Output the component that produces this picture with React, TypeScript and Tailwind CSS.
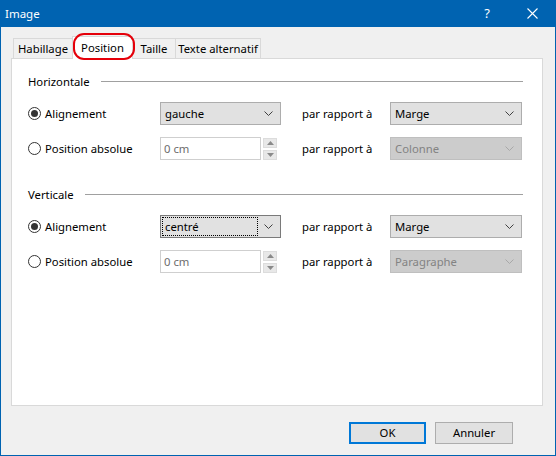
import React from "react";

const font = { fontFamily: '"Noto Sans", "Segoe UI", sans-serif' };

function Chevron({ color = "#606060" }: { color?: string }) {
  return (
    <svg width="9" height="5" viewBox="0 0 9 5" className="shrink-0">
      <path d="M0.5 0.5 L4.5 4.5 L8.5 0.5" fill="none" stroke={color} strokeWidth="1" />
    </svg>
  );
}

function Select({
  value,
  width,
  disabled,
  focused,
}: {
  value: string;
  width: string;
  disabled?: boolean;
  focused?: boolean;
}) {
  return (
    <div
      className={
        "h-[23px] border flex items-center pr-[7px] " +
        width +
        (disabled
          ? " bg-[#cccccc] border-[#bfbfbf] text-[#838383]"
          : focused
          ? " bg-[#e1e1e1] border-[#7a7a7a] text-black"
          : " bg-[#e1e1e1] border-[#adadad] text-black")
      }
    >
      <div className="flex-1 h-full p-[1px]">
        <div
          className={
            "h-full flex items-center pl-[2px] leading-none whitespace-nowrap " +
            (focused ? "border border-dotted border-black" : "border border-transparent")
          }
        >
          {value}
        </div>
      </div>
      <div className="w-[14px] flex justify-end">
        <Chevron color={disabled ? "#a8a8a8" : "#404040"} />
      </div>
    </div>
  );
}

function Radio({ checked, label }: { checked?: boolean; label: string }) {
  return (
    <div className="w-[132px] flex items-center gap-[4px]">
      <div className="w-[13px] h-[13px] rounded-full border border-[#333333] bg-white flex items-center justify-center shrink-0">
        {checked && <div className="w-[7px] h-[7px] rounded-full bg-[#333333]" />}
      </div>
      <span className="leading-none whitespace-nowrap">{label}</span>
    </div>
  );
}

function Spin() {
  return (
    <div className="flex items-center gap-[2px]">
      <div className="w-[101px] h-[23px] border border-[#cfcfcf] bg-white text-[#6d6d6d] flex items-center pl-[3px] leading-none">
        0 cm
      </div>
      <div className="flex flex-col gap-[2px]">
        <div className="w-[14px] h-[10px] bg-[#e8e8e8] border border-[#dcdcdc] flex items-center justify-center">
          <svg width="7" height="4" viewBox="0 0 7 4">
            <path d="M0 4 L3.5 0 L7 4 Z" fill="#8a8a8a" />
          </svg>
        </div>
        <div className="w-[14px] h-[10px] bg-[#e8e8e8] border border-[#dcdcdc] flex items-center justify-center">
          <svg width="7" height="4" viewBox="0 0 7 4">
            <path d="M0 0 L7 0 L3.5 4 Z" fill="#8a8a8a" />
          </svg>
        </div>
      </div>
    </div>
  );
}

function Header({ label }: { label: string }) {
  return (
    <div className="h-[16px] flex items-center gap-[11px] pr-[19px]">
      <span className="leading-none">{label}</span>
      <div className="flex-1 h-px bg-[#a0a0a0] mt-[-2px]" />
    </div>
  );
}

function AlignRow({ value, focused }: { value: string; focused?: boolean }) {
  return (
    <div className="flex items-center">
      <Radio checked label="Alignement" />
      <Select value={value} width="w-[121px]" focused={focused} />
      <span className="ml-[21px] w-[88px] leading-none whitespace-nowrap">par rapport à</span>
      <Select value="Marge" width="w-[132px]" />
    </div>
  );
}

function AbsRow({ rel }: { rel: string }) {
  return (
    <div className="flex items-center">
      <Radio label="Position absolue" />
      <Spin />
      <span className="ml-[25px] w-[88px] leading-none whitespace-nowrap">par rapport à</span>
      <Select value={rel} width="w-[132px]" disabled />
    </div>
  );
}

export default function App() {
  return (
    <div
      className="w-[556px] h-[456px] bg-[#0063b1] flex flex-col text-[11.3px] text-black"
      style={font}
    >
      <div className="h-[27px] flex items-center text-white shrink-0">
        <span className="pl-[5px] text-[11.5px] leading-none">Image</span>
        <div className="flex-1" />
        <span className="text-[13px] leading-none mr-[37px]">?</span>
        <svg width="11" height="11" viewBox="0 0 11 11" className="mr-[18px]">
          <path d="M0.5 0.5 L10.5 10.5 M10.5 0.5 L0.5 10.5" stroke="white" strokeWidth="1.1" />
        </svg>
      </div>
      <div className="flex-1 mx-px mb-px bg-[#f0f0f0] flex flex-col">
        <div className="relative h-[31px] flex items-end pl-[12px] whitespace-nowrap">
          <div className="h-[20px] w-[60px] border border-[#d9d9d9] border-b-0 bg-[#f0f0f0] flex items-center justify-center leading-none">
            Habillage
          </div>
          <div className="h-[23px] w-[61px] border border-[#d9d9d9] border-b-0 bg-white flex items-center justify-center leading-none -mb-px z-10 -mx-px">
            Position
          </div>
          <div className="h-[20px] w-[44px] border border-[#d9d9d9] border-b-0 bg-[#f0f0f0] flex items-center justify-center leading-none">
            Taille
          </div>
          <div className="h-[20px] w-[85px] border border-[#d9d9d9] border-l-0 border-b-0 bg-[#f0f0f0] flex items-center justify-center leading-none">
            Texte alternatif
          </div>
          <div className="absolute left-[72px] top-[6px] w-[62px] h-[27px] rounded-[11px] border-[2.5px] border-[#e5000a] z-20" />
        </div>
        <div className="ml-[10px] w-[532px] h-[348px] bg-white border border-[#d9d9d9] pl-[16px] flex flex-col">
          <div className="mt-[15px]">
            <Header label="Horizontale" />
          </div>
          <div className="mt-[12px]">
            <AlignRow value="gauche" />
          </div>
          <div className="mt-[12px]">
            <AbsRow rel="Colonne" />
          </div>
          <div className="mt-[27px]">
            <Header label="Verticale" />
          </div>
          <div className="mt-[12px]">
            <AlignRow value="centré" focused />
          </div>
          <div className="mt-[12px]">
            <AbsRow rel="Paragraphe" />
          </div>
        </div>
        <div className="flex justify-end gap-[9px] pr-[42px] mt-[16px]">
          <div className="w-[77px] h-[22px] border-2 border-[#0078d7] bg-[#e1e1e1] flex items-center justify-center leading-none">
            OK
          </div>
          <div className="w-[78px] h-[22px] border border-[#adadad] bg-[#e1e1e1] flex items-center justify-center leading-none">
            Annuler
          </div>
        </div>
      </div>
    </div>
  );
}
